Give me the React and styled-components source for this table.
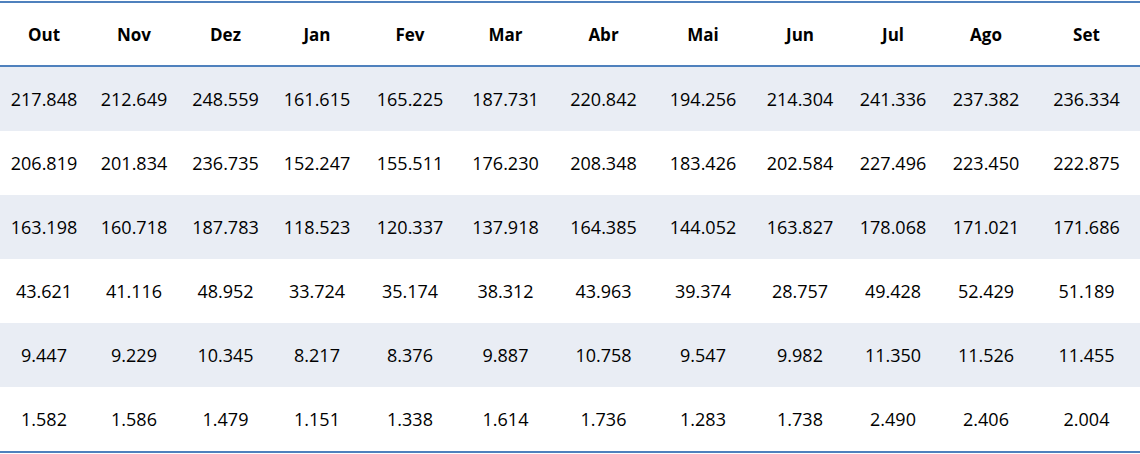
import React from 'react';
import styled, { createGlobalStyle } from 'styled-components';

const GlobalStyle = createGlobalStyle`
   html, body {
      margin: 0;
      padding: 0;
      background: #ffffff;
   }
   body {
      font-family: 'Open Sans', 'Noto Sans', sans-serif;
   }
`;

const Wrap = styled.div`
   width: 1140px;
   padding-top: 1px;
`;

const Table = styled.table`
   width: 1140px;
   border-collapse: collapse;
   table-layout: fixed;
   border-top: 2px solid #4f81bd;
   border-bottom: 2px solid #4f81bd;
   color: #000;
`;

const HeadCell = styled.th`
   height: 62px;
   padding: 0;
   font-size: 17px;
   font-weight: 700;
   text-align: center;
   border-bottom: 2px solid #4f81bd;
`;

const Row = styled.tr`
   background: ${(p) => (p.$band ? '#e9edf4' : '#ffffff')};
`;

const Cell = styled.td`
   height: 64px;
   padding: 0;
   font-size: 18px;
   text-align: center;
   white-space: nowrap;
`;

const months = ['Out', 'Nov', 'Dez', 'Jan', 'Fev', 'Mar', 'Abr', 'Mai', 'Jun', 'Jul', 'Ago', 'Set'];
const widths = [88, 92, 91, 92, 94, 97, 99, 100, 94, 92, 94, 107];

const rows = [
   ['217.848', '212.649', '248.559', '161.615', '165.225', '187.731', '220.842', '194.256', '214.304', '241.336', '237.382', '236.334'],
   ['206.819', '201.834', '236.735', '152.247', '155.511', '176.230', '208.348', '183.426', '202.584', '227.496', '223.450', '222.875'],
   ['163.198', '160.718', '187.783', '118.523', '120.337', '137.918', '164.385', '144.052', '163.827', '178.068', '171.021', '171.686'],
   ['43.621', '41.116', '48.952', '33.724', '35.174', '38.312', '43.963', '39.374', '28.757', '49.428', '52.429', '51.189'],
   ['9.447', '9.229', '10.345', '8.217', '8.376', '9.887', '10.758', '9.547', '9.982', '11.350', '11.526', '11.455'],
   ['1.582', '1.586', '1.479', '1.151', '1.338', '1.614', '1.736', '1.283', '1.738', '2.490', '2.406', '2.004'],
];

const App = () => {
   return (
      <>
         <GlobalStyle />
         <Wrap>
            <Table>
               <colgroup>
                  {widths.map((w, i) => (
                     <col key={i} style={{ width: w }} />
                  ))}
               </colgroup>
               <thead>
                  <tr>
                     {months.map((m) => (
                        <HeadCell key={m}>{m}</HeadCell>
                     ))}
                  </tr>
               </thead>
               <tbody>
                  {rows.map((r, i) => (
                     <Row key={i} $band={i % 2 === 0}>
                        {r.map((v, j) => (
                           <Cell key={j}>{v}</Cell>
                        ))}
                     </Row>
                  ))}
               </tbody>
            </Table>
         </Wrap>
      </>
   );
};

export default App;
